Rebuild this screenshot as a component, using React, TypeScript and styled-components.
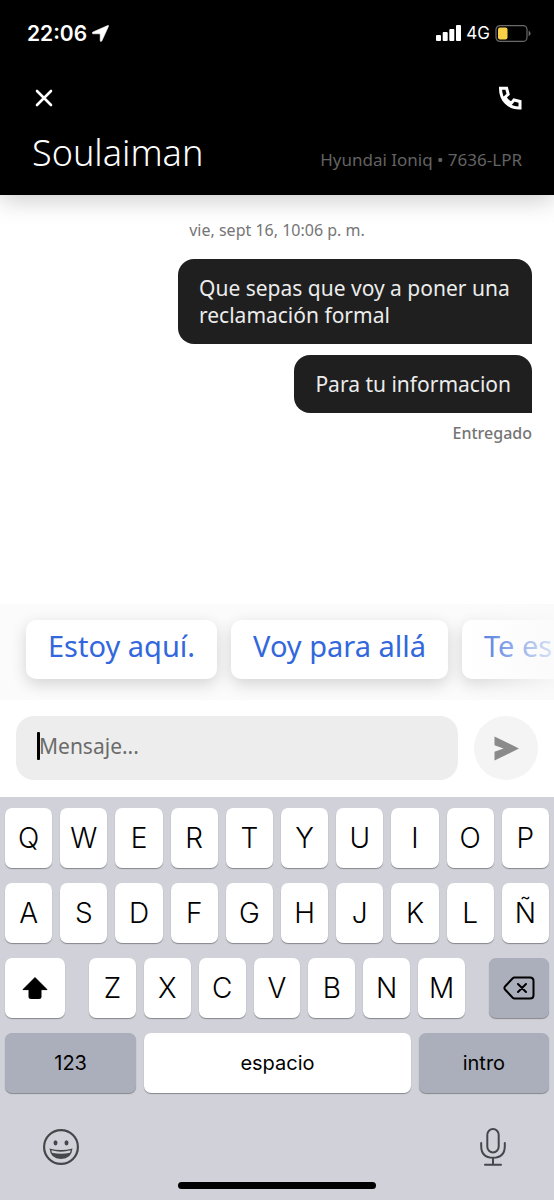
import React from "react";
import styled, { createGlobalStyle } from "styled-components";

const GlobalStyle = createGlobalStyle`
  *, *::before, *::after { box-sizing: border-box; }
  body { margin: 0; background: #fff; }
  button, input { font: inherit; color: inherit; border: 0; padding: 0; background: none; }
  button { cursor: pointer; }
  h1, p, ul { margin: 0; padding: 0; }
  svg { display: block; }
`;

const Screen = styled.div`
  min-height: 100vh;
  display: flex;
  flex-direction: column;
  overflow: hidden;
  font-family: "Noto Sans", "Open Sans", sans-serif;
`;

const Header = styled.header`
  position: relative;
  z-index: 1;
  background: #000;
  color: #fff;
  height: 195px;
  box-shadow: 0 4px 24px rgba(0, 0, 0, 0.22);
`;

const StatusBar = styled.div`
  display: flex;
  justify-content: space-between;
  align-items: center;
  height: 66px;
  padding: 0 23px 0 27px;
  font-family: Inter, sans-serif;
`;

const StatusGroup = styled.div`
  display: flex;
  align-items: center;
  gap: 5px;
`;

const Clock = styled.span`
  font-size: 21px;
  font-weight: 600;
`;

const Network = styled.span`
  font-size: 17px;
  font-weight: 400;
`;

const HeaderActions = styled.div`
  display: flex;
  justify-content: space-between;
  align-items: center;
  height: 64px;
  padding: 0 32px;
`;

const IconButton = styled.button`
  display: grid;
  place-items: center;
`;

const TitleRow = styled.div`
  display: flex;
  justify-content: space-between;
  align-items: baseline;
  padding: 0 32px;
`;

const DriverName = styled.h1`
  font-size: 36px;
  line-height: 46px;
  font-weight: 300;
`;

const Vehicle = styled.span`
  font-size: 17px;
  font-weight: 400;
  color: #636363;
`;

const Conversation = styled.main`
  flex: 1;
  display: flex;
  flex-direction: column;
  align-items: flex-end;
  gap: 11px;
  padding: 24px 22px 0;
`;

const Timestamp = styled.p`
  align-self: center;
  height: 29px;
  font-size: 16px;
  line-height: 22px;
  color: #757575;
`;

const Bubble = styled.p`
  max-width: 354px;
  padding: 16px 21px 15px;
  border-radius: 16px 16px 0 16px;
  background: #1f1f1f;
  color: #ececec;
  font-size: 21px;
  line-height: 27px;
`;

const Receipt = styled.p`
  font-size: 16px;
  line-height: 18px;
  font-weight: 500;
  color: #757575;
`;

const Suggestions = styled.div`
  position: relative;
  height: 96px;
  padding: 16px 0 0 26px;
  display: flex;
  align-items: flex-start;
  gap: 14px;
  overflow: hidden;
  background: #fbfbfb;

  &::after {
    content: "";
    position: absolute;
    inset: 0 0 0 auto;
    width: 90px;
    background: linear-gradient(to right, rgba(250, 250, 250, 0), rgba(250, 250, 250, 0.85));
  }
`;

const Chip = styled.button`
  flex: none;
  height: 59px;
  padding: 0 22px 8px;
  border-radius: 10px;
  background: #fff;
  box-shadow: 0 5px 16px rgba(0, 0, 0, 0.16);
  color: #3367dc;
  font-size: 29px;
  line-height: 38px;
  font-weight: 400;
  white-space: nowrap;
`;

const Composer = styled.form`
  display: flex;
  gap: 16px;
  padding: 16px;
  height: 97px;
`;

const Field = styled.label`
  position: relative;
  flex: 1;
  height: 64px;
`;

const MessageInput = styled.input`
  width: 100%;
  height: 100%;
  padding: 0 23px 4px;
  border-radius: 18px;
  background: #ededed;
  font-size: 21px;
  &::placeholder { color: #6b6b6b; opacity: 1; }
`;

const Caret = styled.span`
  position: absolute;
  left: 21px;
  top: 16px;
  width: 3px;
  height: 28px;
  border-radius: 1px;
  background: #000;
`;

const SendButton = styled.button`
  flex: none;
  width: 64px;
  height: 64px;
  display: grid;
  place-items: center;
  border-radius: 50%;
  background: #f4f4f4;
`;

const Keyboard = styled.section`
  padding: 11px 5px 0;
  background: #d1d2d9;
  font-family: Inter, sans-serif;
  display: flex;
  flex-direction: column;
  gap: 15px;
`;

const KeyRow = styled.div<{ $columns: string; $gap?: number }>`
  display: grid;
  grid-template-columns: ${(p) => p.$columns};
  gap: ${(p) => p.$gap ?? 8}px;
`;

const Key = styled.button<{ $dark?: boolean; $word?: boolean }>`
  display: grid;
  place-items: center;
  height: 60px;
  min-width: 0;
  border-radius: 7px;
  background: ${(p) => (p.$dark ? "#abafbb" : "#fff")};
  box-shadow: 0 1px 1px #85878c;
  color: #000;
  font-size: ${(p) => (p.$word ? 20 : 28)}px;
  font-weight: ${(p) => (p.$word ? 400 : 350)};
`;

const KeyboardFooter = styled.div`
  display: flex;
  justify-content: space-between;
  align-items: center;
  height: 78px;
  padding: 0 43px 0 38px;
`;

const HomeIndicator = styled.div`
  align-self: center;
  width: 198px;
  height: 7px;
  margin-bottom: 11px;
  margin-top: -19px;
  border-radius: 4px;
  background: #000;
`;

const rows = ["QWERTYUIOP", "ASDFGHJKLÑ"];
const replies = ["Estoy aquí.", "Voy para allá", "Te espero"];

export default function App() {
  return (
    <>
      <GlobalStyle />
      <Screen>
        <Header>
          <StatusBar>
            <StatusGroup>
              <Clock>22:06</Clock>
              <svg width="17" height="17" viewBox="0 0 17 17" fill="#fff" stroke="#fff" strokeWidth=".6">
                <path d="M15.8.5 1 7C-.2 7.600 0 8.800 1.200 8.800H7.400Q8.200 8.800 8.200 9.600V15.600C8.200 16.800 9.300 17 9.900 15.800L16.500 1.200C16.800.5 16.500.3 15.800.5Z" />
              </svg>
            </StatusGroup>
            <StatusGroup>
              <svg width="25" height="16" viewBox="0 0 25 16" fill="#fff">
                <rect x="0" y="10" width="5" height="6" rx="1" />
                <rect x="6.700" y="7" width="5" height="9" rx="1" />
                <rect x="13.300" y="4" width="5" height="12" rx="1" />
                <rect x="20" y="0" width="5" height="16" rx="1" />
              </svg>
              <Network>4G</Network>
              <svg width="36" height="17" viewBox="0 0 36 17">
                <rect x="1" y=".6" width="31" height="15.800" rx="4" fill="none" stroke="#6a6a6a" strokeWidth="1.200" />
                <rect x="3" y="2.500" width="9.500" height="12" rx="2" fill="#f7cf46" />
                <path d="M33.600 5.800Q35.600 6.600 35.600 8.500T33.600 11.200Z" fill="#6a6a6a" />
              </svg>
            </StatusGroup>
          </StatusBar>
          <HeaderActions>
            <IconButton aria-label="Cerrar">
              <svg width="24" height="24" viewBox="0 0 24 24" stroke="#fff" strokeWidth="2.600" strokeLinecap="round">
                <path d="M5 5 19 19M19 5 5 19" />
              </svg>
            </IconButton>
            <IconButton aria-label="Llamar">
              <svg width="24" height="24" viewBox="0 0 24 24" fill="none" stroke="#fff" strokeWidth="3">
                <path d="M2.500 2.300H8.600L10.200 8.300 7 11.200Q9.500 15.500 13.300 17.200L16 14 22 15.500V22Q13.500 22.200 8 16.800T2.500 2.300Z" />
              </svg>
            </IconButton>
          </HeaderActions>
          <TitleRow>
            <DriverName>Soulaiman</DriverName>
            <Vehicle>Hyundai Ioniq • 7636-LPR</Vehicle>
          </TitleRow>
        </Header>

        <Conversation>
          <Timestamp>vie, sept 16, 10:06 p. m.</Timestamp>
          <Bubble>Que sepas que voy a poner una reclamación formal</Bubble>
          <Bubble>Para tu informacion</Bubble>
          <Receipt>Entregado</Receipt>
        </Conversation>

        <Suggestions>
          {replies.map((r) => (
            <Chip key={r}>{r}</Chip>
          ))}
        </Suggestions>

        <Composer onSubmit={(e) => e.preventDefault()}>
          <Field>
            <MessageInput aria-label="Mensaje" placeholder="Mensaje..." />
            <Caret />
          </Field>
          <SendButton aria-label="Enviar">
            <svg width="25" height="25" viewBox="0 0 25 25" fill="#8a8a8a">
              <path d="M.5.5 25 12.500.5 24.500V15.800L9.500 12.500.5 9.200Z" />
            </svg>
          </SendButton>
        </Composer>

        <Keyboard>
          {rows.map((row) => (
            <KeyRow key={row} $columns="repeat(10, 1fr)">
              {[...row].map((c) => (
                <Key key={c}>{c}</Key>
              ))}
            </KeyRow>
          ))}
          <KeyRow $columns="60px 1fr 60px" $gap={24}>
            <Key aria-label="Mayúsculas">
              <svg width="26" height="22" viewBox="0 0 26 22">
                <path d="M13 .6 25 12.600H19V20Q19 21.500 17.500 21.500H8.500Q7 21.500 7 20V12.600H1Z" fill="#000" stroke="#000" strokeLinejoin="round" />
              </svg>
            </Key>
            <KeyRow $columns="repeat(7, 1fr)">
              {[..."ZXCVBNM"].map((c) => (
                <Key key={c}>{c}</Key>
              ))}
            </KeyRow>
            <Key $dark aria-label="Borrar">
              <svg width="32" height="24" viewBox="0 0 32 24" fill="none" stroke="#000" strokeWidth="2" strokeLinecap="round" strokeLinejoin="round">
                <path d="M11.500 1.500H27Q30.500 1.500 30.500 5V19Q30.500 22.500 27 22.500H11.500Q10.500 22.500 9.500 21.500L2 13.500Q.8 12 2 10.500L9.500 2.500Q10.500 1.500 11.500 1.500ZM15 8 23 16M23 8 15 16" />
              </svg>
            </Key>
          </KeyRow>
          <KeyRow $columns="131fr 266fr 130fr">
            <Key $dark $word>123</Key>
            <Key $word>espacio</Key>
            <Key $dark $word>intro</Key>
          </KeyRow>
          <KeyboardFooter>
            <IconButton aria-label="Emoji">
              <svg width="36" height="36" viewBox="0 0 36 36">
                <circle cx="18" cy="18" r="16.900" fill="none" stroke="#46474b" strokeWidth="2.200" />
                <ellipse cx="12.500" cy="13.800" rx="2" ry="2.600" fill="#46474b" />
                <ellipse cx="23.500" cy="13.800" rx="2" ry="2.600" fill="#46474b" />
                <path d="M6.500 19.500Q18 22.500 29.500 19.500Q28.500 30 18 30T6.500 19.500Z" fill="#46474b" />
                <path d="M8.300 21.300Q18 24 27.700 21.300L27 23.700Q18 26 9 23.700Z" fill="#d1d2d9" />
              </svg>
            </IconButton>
            <IconButton aria-label="Dictado">
              <svg width="26" height="38" viewBox="0 0 26 38" fill="none" stroke="#46474b" strokeWidth="2" strokeLinecap="round">
                <rect x="7.300" y="1" width="11.400" height="23.500" rx="5.700" />
                <path d="M1.200 15V18Q1.200 29.800 13 29.800T24.800 18V15M13 30V36.500M5 36.700H21" />
              </svg>
            </IconButton>
          </KeyboardFooter>
          <HomeIndicator />
        </Keyboard>
      </Screen>
    </>
  );
}
